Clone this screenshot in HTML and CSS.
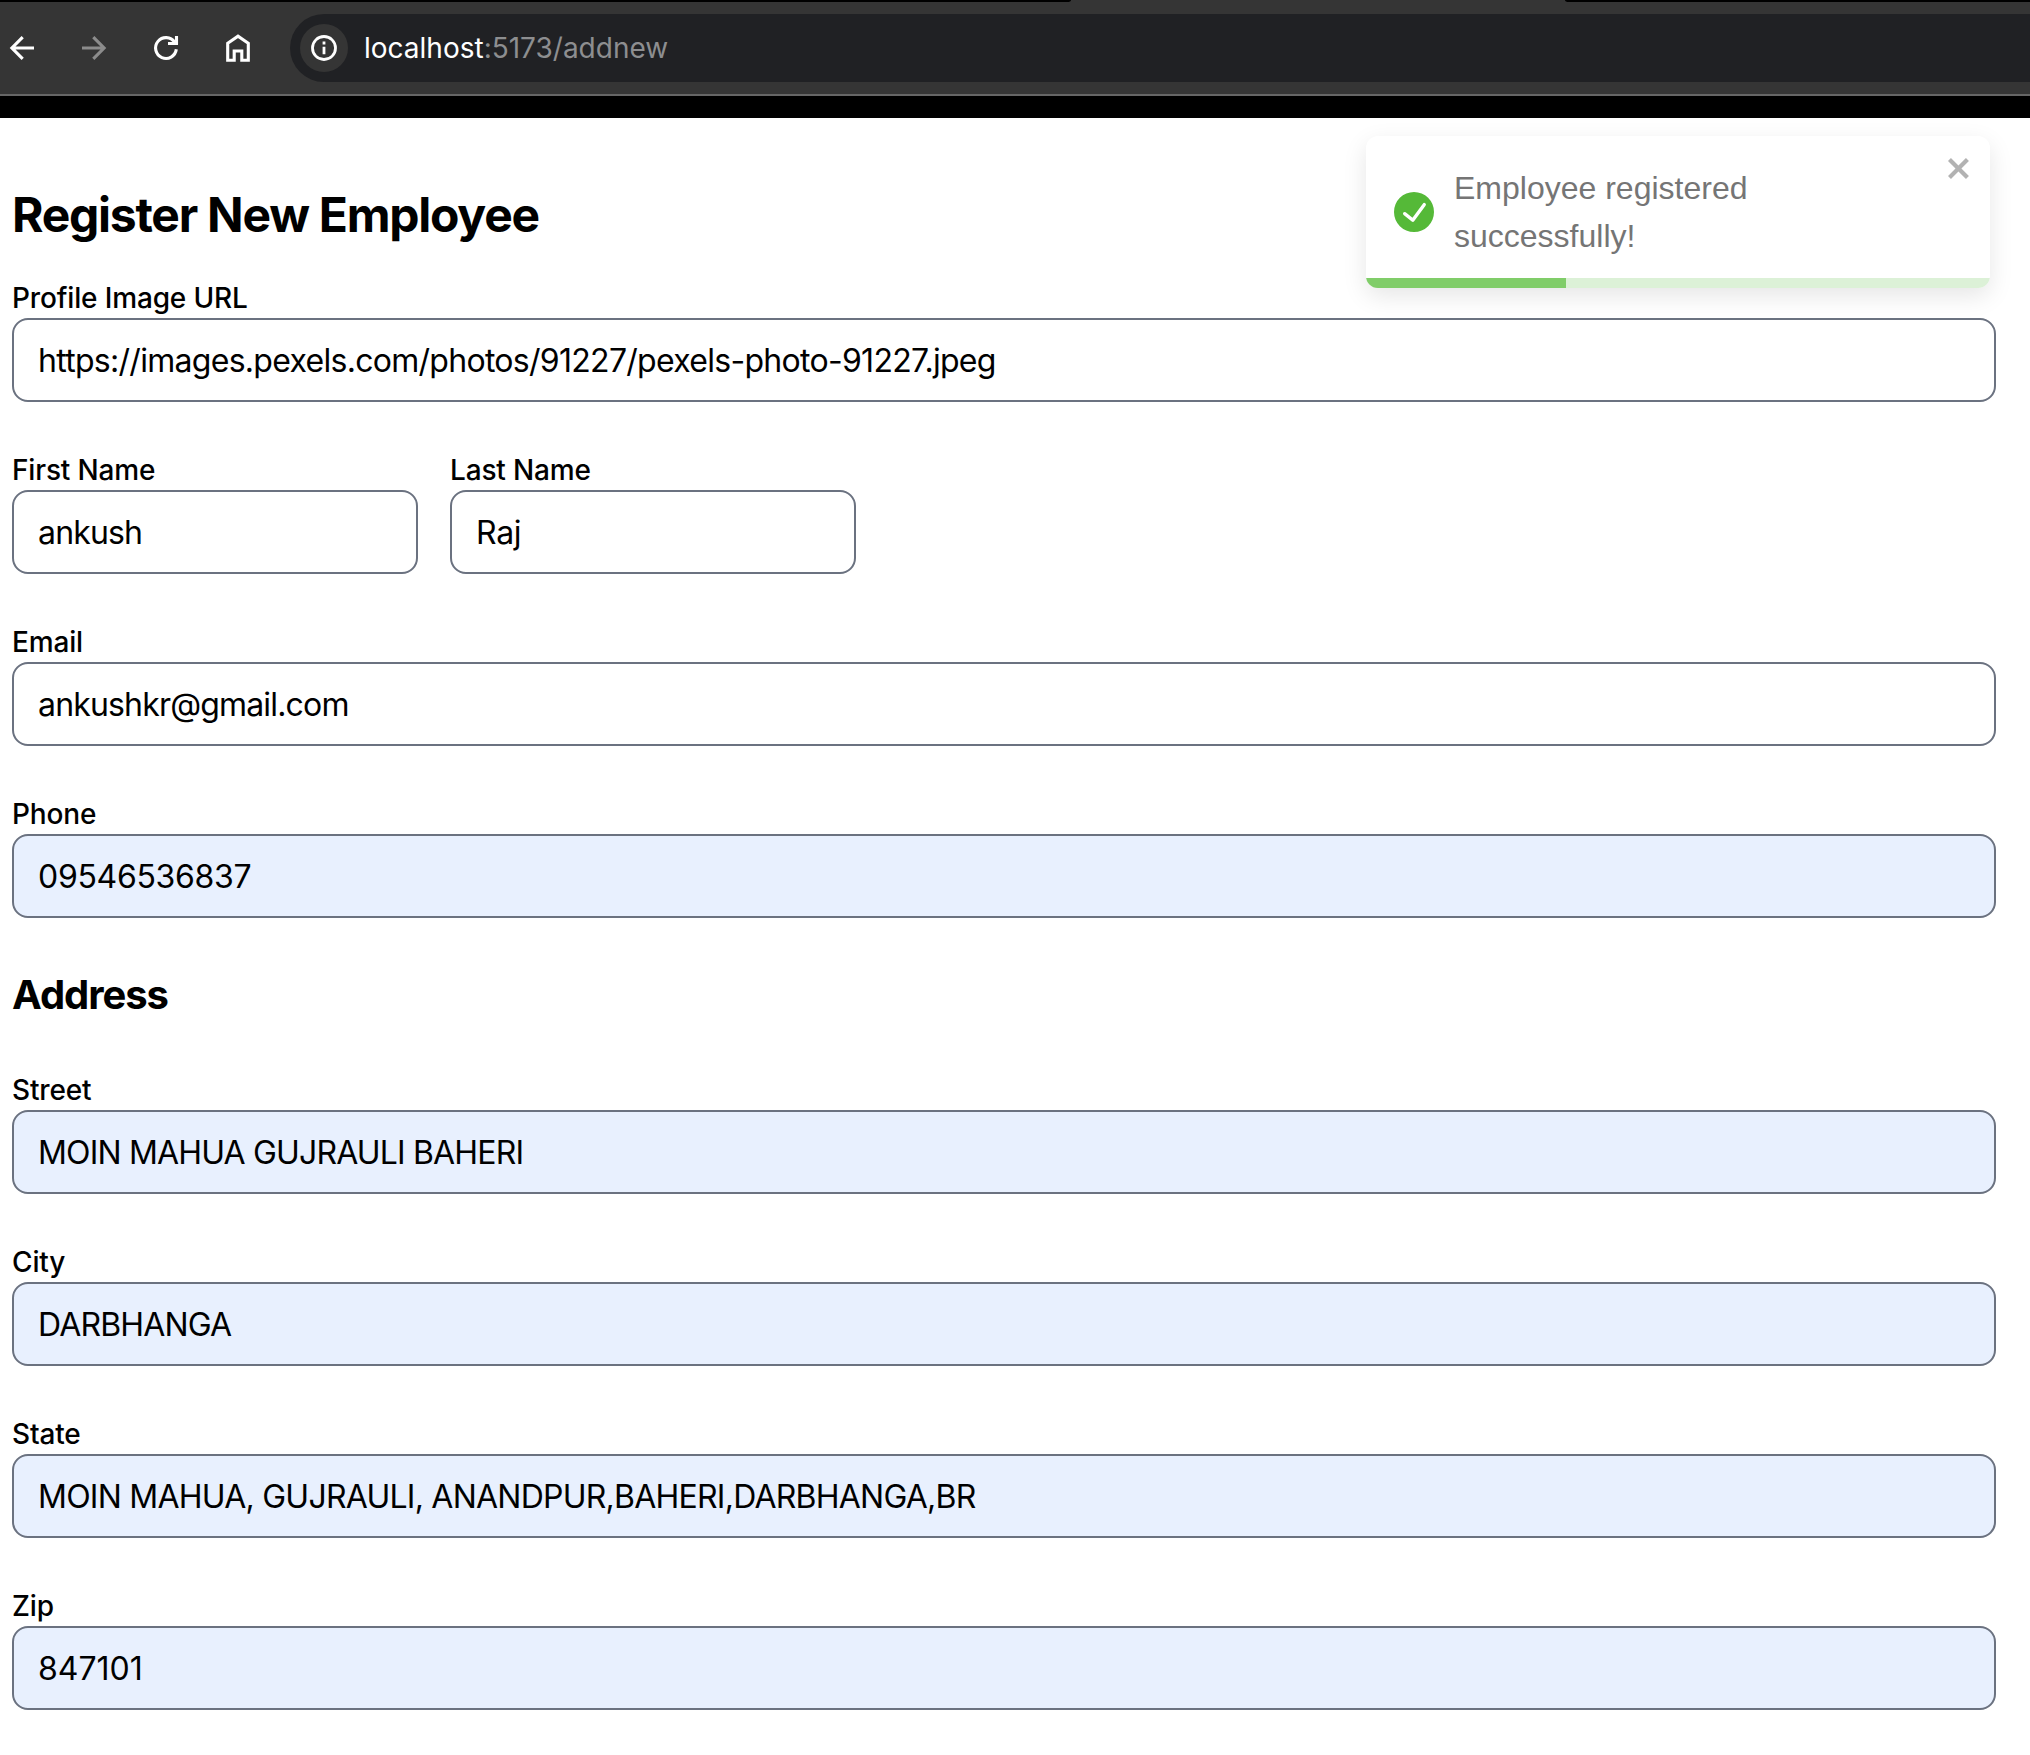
FILE: index.html
```html
<!DOCTYPE html>
<html lang="en">
<head>
  <meta charset="utf-8">
  <title>Register New Employee</title>
  <link rel="stylesheet" href="styles.css">
</head>
<body>
  <div class="tabstrip">
    <div class="tabs tabs-before"></div>
    <div class="tabs tabs-after"></div>
  </div>
  <header class="toolbar">
    <nav class="nav-buttons">
      <svg class="icon" viewBox="0 0 32 32"><path d="M28 16H6.700M16.700 5.200 5.900 16l10.800 10.800"/></svg>
      <svg class="icon icon-disabled" viewBox="0 0 32 32"><path d="M4 16h21.5M15.300 5.200 26.100 16 15.300 26.800"/></svg>
      <svg class="icon" viewBox="0 0 32 32"><path d="M26.300 17.300A10.400 10.400 0 1 1 24.600 10.200M26.500 4v8.500M28 11.500H18"/></svg>
      <svg class="icon" viewBox="0 0 32 32"><path d="M5.700 28.300V11.300L16 4.200l10.300 7.100v17H19.800V19h-7.600v9.300z"/></svg>
    </nav>
    <div class="omnibox">
      <span class="site-info">
        <svg class="info-icon" viewBox="0 0 28 28"><circle cx="14" cy="14" r="11.500"/><path d="M14 12.800v7.400M14 7.600v2.800"/></svg>
      </span>
      <span class="url"><span class="host">localhost</span>:5173/addnew</span>
    </div>
  </header>
  <div class="page-bar"></div>

  <main class="page">
    <h1 class="title">Register New Employee</h1>
    <form class="form">
      <div class="field">
        <label class="label" for="image">Profile Image URL</label>
        <input class="input input-image" id="image" type="text" value="https://images.pexels.com/photos/91227/pexels-photo-91227.jpeg">
      </div>
      <div class="name-row">
        <div class="field">
          <label class="label" for="first">First Name</label>
          <input class="input" id="first" type="text" value="ankush">
        </div>
        <div class="field">
          <label class="label" for="last">Last Name</label>
          <input class="input input-last" id="last" type="text" value="Raj">
        </div>
      </div>
      <div class="field">
        <label class="label" for="email">Email</label>
        <input class="input" id="email" type="text" value="ankushkr@gmail.com">
      </div>
      <div class="field">
        <label class="label" for="phone">Phone</label>
        <input class="input autofilled input-phone" id="phone" type="text" value="09546536837">
      </div>
      <h2 class="subtitle">Address</h2>
      <div class="field">
        <label class="label" for="street">Street</label>
        <input class="input autofilled" id="street" type="text" value="MOIN MAHUA GUJRAULI BAHERI">
      </div>
      <div class="field">
        <label class="label" for="city">City</label>
        <input class="input autofilled" id="city" type="text" value="DARBHANGA">
      </div>
      <div class="field">
        <label class="label" for="state">State</label>
        <input class="input autofilled input-state" id="state" type="text" value="MOIN MAHUA, GUJRAULI, ANANDPUR,BAHERI,DARBHANGA,BR">
      </div>
      <div class="field">
        <label class="label" for="zip">Zip</label>
        <input class="input autofilled input-zip" id="zip" type="text" value="847101">
      </div>
    </form>
  </main>

  <div class="toast" role="alert">
    <div class="toast-body">
      <svg class="toast-icon" viewBox="0 0 24 24"><path d="M12 0a12 12 0 1012 12A12.014 12.014 0 0012 0zm6.927 8.200l-6.845 9.289a1.011 1.011 0 01-1.430.188l-4.888-3.908a1 1 0 111.250-1.562l4.076 3.261 6.227-8.451a1 1 0 111.610 1.183z"/></svg>
      <p class="toast-text">Employee registered successfully!</p>
      <svg class="toast-close" viewBox="0 0 14 16"><path fill-rule="evenodd" d="M7.710 8.230l3.750 3.750-1.480 1.480-3.750-3.750-3.750 3.750L1 11.980l3.750-3.750L1 4.480 2.480 3l3.750 3.750L9.980 3l1.480 1.480-3.750 3.750z"/></svg>
    </div>
    <div class="progress"><div class="progress-value" style="width: 32%"></div></div>
  </div>
</body>
</html>
```
FILE: styles.css
```css
* {
  box-sizing: border-box;
}

body {
  margin: 0;
  min-height: 1755px;
  background: #fff;
  color: #000;
  font-family: Inter, "Liberation Sans", sans-serif;
  overflow: hidden;
}

/* Browser chrome */
.tabstrip {
  display: flex;
  justify-content: space-between;
  height: 2px;
  background: #353535;
}

.tabs {
  background: #000;
}

.tabs-before {
  width: 1071px;
  border-bottom-right-radius: 4px 2px;
}

.tabs-after {
  width: 465px;
  border-bottom-left-radius: 4px 2px;
}

.toolbar {
  display: flex;
  align-items: center;
  height: 94px;
  padding: 0 0 0 6px;
  background: #353535;
  border-bottom: 2px solid #666;
}

.nav-buttons {
  display: flex;
  gap: 40px;
  margin-right: 36px;
}

.icon {
  display: block;
  width: 32px;
  height: 32px;
  fill: none;
  stroke: #fff;
  stroke-width: 3.1;
}

.icon-disabled {
  stroke: #8c8c8c;
}

.omnibox {
  display: flex;
  flex: 1;
  align-items: center;
  height: 68px;
  padding-left: 10px;
  background: #202124;
  border-radius: 34px 0 0 34px;
}

.site-info {
  display: flex;
  align-items: center;
  justify-content: center;
  width: 48px;
  height: 48px;
  margin-right: 16px;
  background: #353535;
  border-radius: 50%;
}

.info-icon {
  width: 28px;
  height: 28px;
  fill: none;
  stroke: #fff;
  stroke-width: 2.8;
}

.url {
  color: #8d8e90;
  font-size: 28px;
  line-height: 40px;
}

.host {
  color: #fff;
}

.page-bar {
  height: 22px;
  background: #000;
}

/* Form */
.page {
  padding: 65px 34px 45px 12px;
}

.title,
.subtitle {
  margin: 0;
  font-weight: 700;
}

.title {
  margin-bottom: 31px;
  font-size: 48px;
  line-height: 64px;
  letter-spacing: -1.25px;
}

.subtitle {
  padding-top: 2px;
  font-size: 40px;
  line-height: 54px;
  letter-spacing: -1.05px;
}

.form {
  display: flex;
  flex-direction: column;
  gap: 48px;
}

.name-row {
  display: grid;
  grid-template-columns: 406px 406px;
  gap: 32px;
}

.field {
  display: flex;
  flex-direction: column;
}

.label {
  font-size: 28px;
  font-weight: 500;
  line-height: 40px;
  letter-spacing: -0.15px;
}

.input {
  width: 100%;
  height: 84px;
  margin: 0;
  padding: 16px 24px;
  background: #fff;
  border: 2px solid #6b7280;
  border-radius: 16px;
  color: #000;
  font: 400 32px/48px Inter, "Liberation Sans", sans-serif;
  letter-spacing: -0.83px;
}

.autofilled {
  background: #e8f0fe;
}

.input-image {
  letter-spacing: -0.71px;
}

.input-state {
  letter-spacing: -0.76px;
}

.input-last {
  letter-spacing: -0.3px;
}

.input-phone {
  letter-spacing: -0.31px;
}

.input-zip {
  letter-spacing: 0;
}

/* Notification floating over the page */
.toast {
  position: absolute;
  top: 136px;
  right: 40px;
  width: 624px;
  height: 152px;
  display: flex;
  flex-direction: column;
  justify-content: space-between;
  overflow: hidden;
  background: #fff;
  border-radius: 12px;
  box-shadow: 0 8px 24px rgba(0, 0, 0, 0.1);
  clip-path: inset(-18px -40px -50px -40px);
}

.toast-body {
  display: flex;
  align-items: flex-start;
  padding: 16px 16px 0 28px;
}

.toast-icon {
  flex: none;
  width: 40px;
  height: 40px;
  margin: 40px 20px 0 0;
  fill: #55b938;
}

.toast-text {
  flex: none;
  width: 400px;
  margin: 12px auto 0 0;
  color: #757575;
  font: 400 32px/48px "Liberation Sans", Arial, sans-serif;
}

.toast-close {
  flex: none;
  width: 28px;
  height: 32px;
  fill: #b2b2b2;
}

.progress {
  height: 10px;
  background: #dcf1d7;
}

.progress-value {
  height: 100%;
  background: #80cd69;
}
```
